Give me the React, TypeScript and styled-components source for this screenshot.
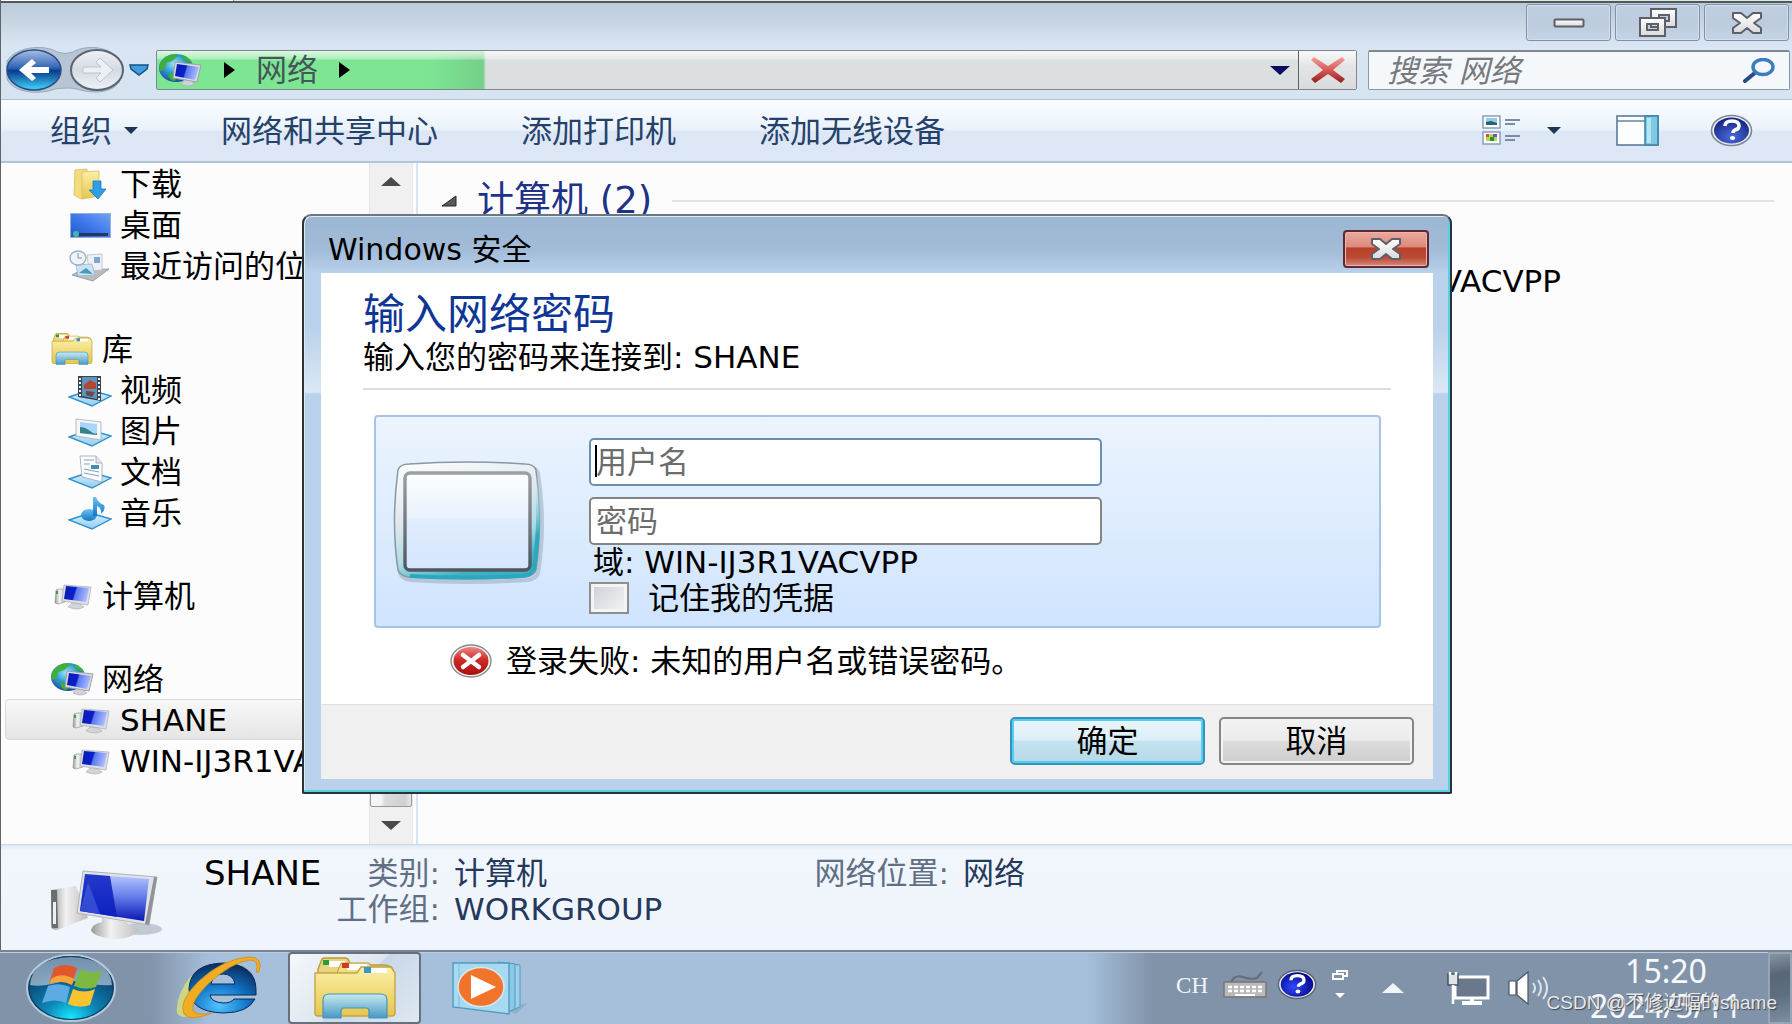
import React from "react";
import styled, { createGlobalStyle } from "styled-components";

const GlobalStyle = createGlobalStyle`
  * { box-sizing: border-box; }
  html, body { margin: 0; padding: 0; }
  body {
    font-family: "DejaVu Sans", "Noto Sans CJK SC", sans-serif;
    font-size: 31px;
    line-height: 40px;
    color: #000;
    background: #fcfcfc;
    overflow: hidden;
  }
  button, input {
    font: inherit;
    color: inherit;
    margin: 0;
    padding: 0;
  }
  h1, h2, p, ul, dl, dd, dt { margin: 0; padding: 0; font-weight: 400; }
  svg { display: block; flex: none; }
`;

/* ---------- explorer window ---------- */

const Desktop = styled.div`
  position: relative;
  display: flex;
  flex-direction: column;
  min-height: 100vh;
`;

const ExplorerWindow = styled.div`
  flex: 1;
  display: flex;
  flex-direction: column;
  min-height: 0;
  border-left: 1px solid #5f6468;
`;

const BackgroundTab = styled.div`
  height: 3px;
  border-bottom: 2px solid #4f5a58;
  background: linear-gradient(90deg, #fff 232px, #8f9a98 232px, #8f9a98 233px, #dfe9e4 233px);
`;

const Chrome = styled.header`
  display: flex;
  flex-direction: column;
  gap: 6px;
  height: 97px;
  background: linear-gradient(180deg, #bccbd9 0, #c8d6e4 20px, #d9e5f2 42px, #d6e3f0 100%);
  border-bottom: 1px solid #b5c0cb;
`;

const WindowButtons = styled.div`
  display: flex;
  justify-content: flex-end;
  gap: 4px;
  padding: 1px 3px 0 0;
`;

const WindowButton = styled.button`
  display: grid;
  place-items: center;
  width: 85px;
  height: 37px;
  background: linear-gradient(180deg, #c0cfe0, #bccbdd 50%, #c5d4e5);
  border: 1px solid #8290ad;
  border-radius: 3px;
  box-shadow: inset 0 0 0 1px #d3dfec;
`;

const NavRow = styled.div`
  display: flex;
  align-items: center;
  padding: 0 2px 0 2px;
`;

const AddressBar = styled.div`
  flex: 1;
  display: flex;
  align-items: center;
  height: 40px;
  margin-left: 2px;
  border: 1px solid #80868c;
  border-radius: 2px;
  background:
    linear-gradient(180deg, rgba(255, 255, 255, 0.75) 0, rgba(255, 255, 255, 0.35) 8px, transparent 9px),
    linear-gradient(90deg, #7de693 0, #7de693 270px, #74d08a 326px, transparent 329px),
    #dcdfe0;
`;

const Crumb = styled.button`
  display: flex;
  align-items: center;
  gap: 21px;
  height: 38px;
  padding: 0;
  border: 0;
  background: none;
  color: #44565c;
`;

const AddressSpacer = styled.div`
  flex: 1;
`;

const DropButton = styled.button<{ $narrow?: boolean }>`
  display: grid;
  place-items: center;
  width: ${(p) => (p.$narrow ? 30 : 37)}px;
  height: 38px;
  border: 0;
  background: none;
`;

const StopButton = styled.button`
  display: grid;
  place-items: center;
  width: 58px;
  height: 38px;
  border: 0;
  border-left: 1px solid #5e6266;
  background: linear-gradient(180deg, #fafafa, #e3e4e5 40%, #d9dbdc);
`;

const SearchBox = styled.label`
  display: flex;
  align-items: center;
  width: 422px;
  height: 40px;
  margin-left: 11px;
  padding: 0 14px 0 18px;
  border: 1px solid #8e979f;
  border-top: 2px solid #80878e;
  border-radius: 2px;
  background: #f5f8fb;
`;

const SearchInput = styled.input`
  flex: 1;
  min-width: 0;
  height: 36px;
  border: 0;
  outline: 0;
  background: transparent;
  font-style: italic;
  &::placeholder { color: #767a7e; opacity: 1; }
`;

const Toolbar = styled.div`
  display: flex;
  align-items: center;
  height: 63px;
  padding: 0 39px 0 49px;
  background: linear-gradient(180deg, #fbfdff 0, #e9f2fb 30px, #dde7f5 31px, #dce6f4 100%);
  border-bottom: 2px solid #b4c4d8;
`;

const Commands = styled.div`
  flex: 1;
  display: flex;
  gap: 83px;
`;

const Tools = styled.div`
  display: flex;
  align-items: center;
`;

const ToolButton = styled.button<{ $gap?: number }>`
  display: flex;
  align-items: center;
  gap: 12px;
  margin-left: ${(p) => p.$gap || 0}px;
  border: 0;
  background: none;
  color: #25416a;
  white-space: nowrap;
`;

const Body = styled.div`
  flex: 1;
  display: flex;
  min-height: 0;
  background: #fcfcfc;
`;

const Sidebar = styled.nav`
  width: 368px;
  overflow: hidden;
`;

const TreeGroup = styled.ul`
  list-style: none;
  margin-bottom: 42px;
`;

const TreeRow = styled.li<{ $level: number; $selected?: boolean }>`
  display: grid;
  grid-template-columns: 44px 1fr;
  column-gap: 8px;
  align-items: center;
  height: 41px;
  margin-left: 4px;
  padding-left: ${(p) => (p.$level === 1 ? 44 : 62)}px;
  white-space: nowrap;
  border: 1px solid ${(p) => (p.$selected ? "#d9d9d9" : "transparent")};
  border-radius: 4px;
  background: ${(p) => (p.$selected ? "linear-gradient(180deg, #f8f8f8, #e5e5e5)" : "none")};
`;

const TreeIcon = styled.span`
  display: grid;
  place-items: center;
`;

const TreeLink = styled.a`
  color: #000;
  text-decoration: none;
`;

const ScrollTrack = styled.div`
  display: flex;
  flex-direction: column;
  align-items: center;
  width: 44px;
  border-left: 1px solid #e4e4e4;
  border-right: 1px solid #e9e9e9;
  background: #f0f0f0;
`;

const ScrollButton = styled.button`
  display: grid;
  place-items: center;
  width: 42px;
  height: 37px;
  border: 0;
  background: none;
`;

const ScrollThumb = styled.div`
  flex: 1;
  width: 42px;
  margin-top: 40px;
  border: 1px solid #979797;
  border-radius: 2px;
  background: linear-gradient(90deg, #f5f5f5 25%, #d9dadc 35%, #cfd1d4 85%, #e6e6e8);
`;

const Content = styled.main`
  flex: 1;
  margin-left: 3px;
  padding: 15px 18px 0 23px;
  border-left: 2px solid #d6e5f5;
`;

const GroupHeader = styled.div`
  display: flex;
  align-items: center;
  gap: 20px;
  height: 46px;
`;

const GroupTitle = styled.h2`
  font-size: 37px;
  color: #1e3287;
  white-space: nowrap;
`;

const GroupRule = styled.div`
  flex: 1;
  height: 2px;
  background: #e2e2e2;
`;

const Items = styled.div`
  display: flex;
  justify-content: flex-end;
  padding: 37px 213px 0 0;
`;

const Details = styled.footer`
  display: flex;
  height: 106px;
  padding: 8px 0 0 49px;
  border-top: 1px solid #c9d6e6;
  background: linear-gradient(180deg, #dfe8f3 0, #f1f5fc 5px, #f0f4fc 100%);
`;

const DetailsPicture = styled.div`
  padding-top: 17px;
`;

const DetailsName = styled.p`
  width: 156px;
  margin-left: 40px;
  font-size: 34px;
`;

const Props = styled.dl<{ $keyWidth: number }>`
  display: grid;
  grid-template-columns: ${(p) => p.$keyWidth}px auto;
  grid-auto-rows: 36px;
  column-gap: 14px;
`;

const Key = styled.dt`
  white-space: nowrap;
  justify-self: end;
  color: #5f6f85;
`;

const Value = styled.dd`
  color: #24395c;
  white-space: nowrap;
`;

const DetailColumns = styled.div`
  display: grid;
  grid-template-columns: 330px auto;
`;

/* ---------- dialog ---------- */

const Dialog = styled.section`
  position: absolute;
  left: 302px;
  top: 214px;
  width: 1150px;
  display: flex;
  flex-direction: column;
  padding: 0 17px 13px;
  border: 2px solid #2b3338;
  border-top-color: #6e777f;
  border-radius: 9px 9px 2px 2px;
  background:
    linear-gradient(180deg, #9bb6d3 0, #a3bcd8 35px, #b9d1ea 57px, #b9d1ea 110px, #dbe8f5 176px, #b9d1ea 178px);
  box-shadow: inset -2px -2px 0 #58cfe4, inset 1px 1px 0 #dce8f4;
`;

const DialogTitleBar = styled.div`
  display: flex;
  justify-content: space-between;
  align-items: flex-start;
  height: 57px;
  padding: 14px 4px 0 7px;
`;

const DialogTitle = styled.span`
  font-size: 30px;
`;

const DialogClose = styled.button`
  display: grid;
  place-items: center;
  width: 86px;
  height: 38px;
  border: 2px solid #5c2a35;
  border-radius: 4px;
  background: linear-gradient(180deg, #e9a99d 0, #dc8a7c 45%, #b8402a 46%, #bb4934 75%, #d4897a 100%);
  box-shadow: inset 0 0 0 1px #eeb5aa;
`;

const DialogBody = styled.form`
  display: flex;
  flex-direction: column;
  background: #fff;
`;

const DialogIntro = styled.div`
  margin: 20px 42px 0;
  padding-bottom: 11px;
  border-bottom: 2px solid #dedede;
`;

const DialogHeading = styled.h1`
  font-size: 42px;
  line-height: 44px;
  color: #0d3696;
`;

const CredentialPanel = styled.div`
  display: flex;
  height: 213px;
  margin: 25px 52px 0 53px;
  padding: 21px 0 0 14px;
  border: 2px solid #a6c4e8;
  border-radius: 4px;
  background: linear-gradient(180deg, #ecf4fe, #cfe4fe);
`;

const PictureSlot = styled.div`
  padding-top: 22px;
  width: 199px;
`;

const Fields = styled.div`
  display: flex;
  flex-direction: column;
  width: 513px;
`;

const FieldStack = styled.div`
  display: flex;
  flex-direction: column;
  gap: 11px;
`;

const FieldWrap = styled.div`
  position: relative;
  height: 48px;
`;

const TextField = styled.input<{ $active?: boolean }>`
  width: 100%;
  height: 48px;
  padding: 0 5px;
  border: 2px solid ${(p) => (p.$active ? "#6a8fae" : "#848484")};
  border-radius: 5px;
  background: #fff;
  outline: 0;
  &::placeholder { color: #6d6d6d; opacity: 1; }
`;

const Caret = styled.span`
  position: absolute;
  left: 6px;
  top: 7px;
  width: 2px;
  height: 32px;
  background: #000;
`;

const DomainLine = styled.p`
  line-height: 34px;
  padding-left: 4px;
  white-space: nowrap;
`;

const RememberLabel = styled.label`
  display: flex;
  align-items: center;
  gap: 19px;
  height: 38px;
`;

const CheckBox = styled.input`
  appearance: none;
  width: 40px;
  height: 32px;
  border: 2px solid #8e8f8f;
  background: linear-gradient(135deg, #cbcfd5, #f6f6f6);
  box-shadow: inset 0 0 0 3px #f4f4f4;
`;

const ErrorLine = styled.p`
  display: flex;
  align-items: center;
  gap: 14px;
  height: 40px;
  margin: 13px 0 0 129px;
`;

const DialogFooter = styled.div`
  display: flex;
  justify-content: flex-end;
  gap: 14px;
  height: 75px;
  margin-top: 23px;
  padding: 12px 19px 0 0;
  border-top: 1px solid #dfdfdf;
  background: #f0f0f0;
`;

const PushButton = styled.button<{ $primary?: boolean }>`
  width: 195px;
  height: 48px;
  border: 2px solid ${(p) => (p.$primary ? "#3c8fb8" : "#858585")};
  border-radius: 5px;
  background: ${(p) =>
    p.$primary
      ? "linear-gradient(180deg, #ecf6fb 0, #dceff7 48%, #c6e2ee 50%, #b5d8e8 100%)"
      : "linear-gradient(180deg, #f3f3f3 0, #ebebeb 48%, #dddddd 50%, #cdcdcd 100%)"};
  box-shadow: ${(p) => (p.$primary ? "inset 0 0 0 2px #4dd0f4" : "inset 0 0 0 2px #f3f3f3")};
`;

/* ---------- taskbar ---------- */

const Taskbar = styled.footer`
  display: flex;
  height: 74px;
  border-top: 2px solid #77838f;
  background: linear-gradient(90deg, #8193a9 0, #8193a9 150px, #a6bfdb 210px, #a6bfdb calc(100% - 705px), #8193a9 calc(100% - 640px), #8193a9 100%);
  box-shadow: inset 0 1px 0 #bccddd;
`;

const TaskButton = styled.button<{ $width: number; $open?: boolean }>`
  display: grid;
  place-items: center;
  width: ${(p) => p.$width}px;
  height: 72px;
  border: ${(p) => (p.$open ? "2px solid #66717d" : "0")};
  border-radius: 4px;
  background: ${(p) =>
    p.$open ? "linear-gradient(135deg, #f4f7fa 0, #dde6ef 50%, #c9d8e8 51%, #dfe8f2 100%)" : "none"};
`;

const TaskSpacer = styled.div`
  flex: 1;
`;

const Tray = styled.div`
  display: flex;
  align-items: center;
  color: #fff;
`;

const TrayItem = styled.button<{ $left?: number; $lift?: number }>`
  display: block;
  margin-left: ${(p) => p.$left || 0}px;
  margin-bottom: ${(p) => p.$lift || 0}px;
  border: 0;
  background: none;
`;

const Language = styled(TrayItem)`
  font-family: "Liberation Serif", serif;
  font-size: 23px;
  line-height: 28px;
  color: #f4f7fa;
`;

const Clock = styled.div`
  width: 170px;
  margin-left: 31px;
  font-family: "Noto Sans", sans-serif;
  font-size: 32px;
  line-height: 35px;
  text-align: center;
  color: #f6f9fb;
`;

const ShowDesktop = styled.button`
  width: 24px;
  height: 72px;
  margin-left: 17px;
  border: 2px solid #98a5b3;
  background: linear-gradient(170deg, #8793a1 0, #586677 30%, #5e6e81 60%, #7c8ea5 100%);
`;

const Watermark = styled.p`
  position: absolute;
  right: 15px;
  bottom: 6px;
  font-family: "Liberation Sans", "Noto Sans CJK SC", sans-serif;
  font-size: 19px;
  line-height: 30px;
  color: #e6e8ea;
  text-shadow: 1px 1px 1px #3c4650;
  white-space: nowrap;
`;

/* ---------- drawings ---------- */

const DefsSvg = styled.svg`
  position: absolute;
`;

const SharedDefs = () => (
  <DefsSvg width="0" height="0" aria-hidden="true">
    <defs>
      <linearGradient id="screen" x1="0" y1="0" x2="1" y2="0.2">
        <stop offset="0" stopColor="#0a1bb0" />
        <stop offset="0.48" stopColor="#0b1fcc" />
        <stop offset="0.54" stopColor="#5a78f0" />
        <stop offset="1" stopColor="#a9baff" />
      </linearGradient>
      <linearGradient id="screenDeep" x1="0" y1="0" x2="0" y2="1">
        <stop offset="0" stopColor="#b9c9ff" />
        <stop offset="0.45" stopColor="#6a83ee" />
        <stop offset="1" stopColor="#0a17b4" />
      </linearGradient>
      <linearGradient id="metal" x1="0" y1="0" x2="1" y2="0">
        <stop offset="0" stopColor="#9a9a9a" />
        <stop offset="0.4" stopColor="#f2f2f2" />
        <stop offset="1" stopColor="#bdbdbd" />
      </linearGradient>
      <radialGradient id="globe" cx="0.45" cy="0.35" r="0.7">
        <stop offset="0" stopColor="#9fe6ff" />
        <stop offset="0.45" stopColor="#2f9fd0" />
        <stop offset="1" stopColor="#1a3f9a" />
      </radialGradient>
      <linearGradient id="backFill" x1="0" y1="0" x2="0" y2="1">
        <stop offset="0" stopColor="#a9bfe4" />
        <stop offset="0.45" stopColor="#2f62b4" />
        <stop offset="0.52" stopColor="#0a3a8c" />
        <stop offset="1" stopColor="#3fd8fb" />
      </linearGradient>
      <linearGradient id="forwardFill" x1="0" y1="0" x2="0" y2="1">
        <stop offset="0" stopColor="#eef2f6" />
        <stop offset="0.5" stopColor="#d3dae2" />
        <stop offset="1" stopColor="#eef3f8" />
      </linearGradient>
      <linearGradient id="glyph" x1="0" y1="0" x2="0" y2="1">
        <stop offset="0" stopColor="#fff" />
        <stop offset="1" stopColor="#d9d9dc" />
      </linearGradient>
      <linearGradient id="folder" x1="0" y1="0" x2="0" y2="1">
        <stop offset="0" stopColor="#fbf0a8" />
        <stop offset="1" stopColor="#e6c64c" />
      </linearGradient>
      <linearGradient id="clip" x1="0" y1="0" x2="0" y2="1">
        <stop offset="0" stopColor="#c3ecf8" />
        <stop offset="1" stopColor="#3f96cf" />
      </linearGradient>
      <linearGradient id="redX" x1="0" y1="0" x2="0" y2="1">
        <stop offset="0" stopColor="#f2a09a" />
        <stop offset="0.5" stopColor="#d85a55" />
        <stop offset="1" stopColor="#8e1c1c" />
      </linearGradient>
      <radialGradient id="helpFill" cx="0.5" cy="0.75" r="0.7">
        <stop offset="0" stopColor="#4a6be0" />
        <stop offset="1" stopColor="#16267f" />
      </radialGradient>
      <radialGradient id="trayHelp" cx="0.4" cy="0.6" r="0.6">
        <stop offset="0" stopColor="#2f4bff" />
        <stop offset="1" stopColor="#06088c" />
      </radialGradient>
      <linearGradient id="errorFill" x1="0" y1="0" x2="0" y2="1">
        <stop offset="0" stopColor="#e88a86" />
        <stop offset="0.45" stopColor="#cf2a28" />
        <stop offset="1" stopColor="#a90f10" />
      </linearGradient>
      <linearGradient id="desktopFill" x1="0" y1="1" x2="1" y2="0">
        <stop offset="0" stopColor="#1d55cf" />
        <stop offset="0.5" stopColor="#3f78ea" />
        <stop offset="1" stopColor="#6fa2f8" />
      </linearGradient>
      <linearGradient id="tray3d" x1="0" y1="0" x2="0" y2="1">
        <stop offset="0" stopColor="#d9f1fc" />
        <stop offset="1" stopColor="#8fcdf0" />
      </linearGradient>
      <linearGradient id="note" x1="0" y1="0" x2="0" y2="1">
        <stop offset="0" stopColor="#6cc2f2" />
        <stop offset="1" stopColor="#1177c4" />
      </linearGradient>
    </defs>
  </DefsSvg>
);

const BackForward = () => (
  <svg width="121" height="46" viewBox="0 0 121 46" aria-hidden="true">
    <path d="M4 14C14-2 44-2 54 5Q62 8 70 5C86-4 114 0 119 20C121 38 108 45 92 45C80 45 74 41 66 41Q58 41 52 42C36 48 10 46 4 32Z" fill="#b7c4d3" stroke="#99a7b8" />
    <ellipse cx="31" cy="23" rx="27" ry="20" fill="url(#backFill)" stroke="#2a4b86" strokeWidth="1.5" />
    <path d="M16 23L29 12L33 16L28 20H46V26H28L33 31L29 34Z" fill="#fff" />
    <ellipse cx="94" cy="23" rx="26" ry="20" fill="url(#forwardFill)" stroke="#5c6470" strokeWidth="2" />
    <path d="M110 23L97 11L93 15L98 20H80V26H98L93 31L97 35Z" fill="#eceff3" stroke="#bcc4cd" />
  </svg>
);

const HistoryArrow = () => (
  <svg width="24" height="14" viewBox="0 0 24 14" aria-hidden="true">
    <path d="M3 2H21L20 6L12 12L4 6Z" fill="#3d9fe0" stroke="#1d4f86" strokeWidth="1.5" />
  </svg>
);

const Globe = ({ width = 44, height = 34 }: { width?: number; height?: number }) => (
  <svg width={width} height={height} viewBox="0 0 44 34" aria-hidden="true">
    <ellipse cx="18" cy="15" rx="17" ry="14" fill="url(#globe)" />
    <path d="M4 8C10 0 18 1 20 3L14 8L8 10L7 16L2 18C1 13 2 10 4 8ZM14 20L20 22L17 28C13 28 11 25 10 22ZM24 2C30 4 34 8 34 10L28 8L25 6Z" fill="#3fae3a" />
    <path d="M17 9L43 12L39 29L15 25Z" fill="#d7dbe0" stroke="#9aa0a8" />
    <path d="M19 11L41 14L37 27L17 23Z" fill="url(#screen)" />
    <path d="M26 27L33 28L37 31Q31 35 23 31Z" fill="#cfd2d6" stroke="#a3a6aa" strokeWidth="0.6" />
  </svg>
);

const Computer = () => (
  <svg width="42" height="29" viewBox="-3 -2 42 29" aria-hidden="true">
    <path d="M2 6L5 5L12 5L11 18L4 20L1 19Z" fill="url(#metal)" stroke="#8c8c8c" strokeWidth="0.6" />
    <rect x="2" y="7" width="2" height="3" fill="#3aa03a" />
    <path d="M10 1L37 3L34 21L8 17Z" fill="#dcdfe3" stroke="#a7abb0" strokeWidth="0.7" />
    <path d="M12 2L35 4L32 18L10 15Z" fill="url(#screen)" />
    <path d="M18 19L26 20L30 23Q24 27 14 23Z" fill="#d2d4d7" stroke="#a9a9a9" strokeWidth="0.6" />
  </svg>
);

const BigComputer = () => (
  <svg width="114" height="72" viewBox="0 0 114 72" aria-hidden="true">
    <ellipse cx="90" cy="59" rx="22" ry="6" fill="#c3c9d2" />
    <path d="M1 20L26 16L38 48L7 60Q1 60 1 56Z" fill="url(#metal)" />
    <path d="M1 20L7 20L8 58L2 58Z" fill="#6a6d72" />
    <rect x="3" y="32" width="3" height="22" fill="#f0f0f0" />
    <path d="M33 1L107 7L99 55L27 43Z" fill="#dfe2e6" stroke="#b0b4b8" />
    <path d="M104 7L107 7L99 55L95 54Z" fill="#8f9399" />
    <path d="M35 4L99 9L94 51L30 41Z" fill="url(#screenDeep)" />
    <path d="M35 4L60 6L67 47L30 41Z" fill="#0a1fc0" opacity="0.85" />
    <path d="M30 41L38 12L50 44Z" fill="#4a62e0" opacity="0.6" />
    <path d="M52 48L76 52L90 60Q80 70 62 69Q42 66 41 60Q42 54 52 52Z" fill="url(#metal)" />
  </svg>
);

const Downloads = () => (
  <svg width="34" height="32" viewBox="0 0 34 32" aria-hidden="true">
    <path d="M2 2L14 1V27L8 31L1 27Z" fill="#f3dc80" stroke="#d9bd5e" strokeWidth="0.8" />
    <path d="M9 4L26 3V28L9 31Z" fill="url(#folder)" stroke="#d9bd5e" strokeWidth="0.8" />
    <path d="M20 13H28V21H33L25 31L16 22H20Z" fill="#2f9fe4" stroke="#1a76bb" strokeWidth="0.8" />
  </svg>
);

const DesktopIcon = () => (
  <svg width="41" height="25" viewBox="0 0 41 25" aria-hidden="true">
    <rect x="0.5" y="0.5" width="40" height="24" fill="url(#desktopFill)" stroke="#98b0d4" />
    <rect x="3" y="20" width="35" height="3" fill="#1d3a66" />
    <circle cx="6" cy="21" r="3" fill="#3fb6b0" />
  </svg>
);

const Recent = () => (
  <svg width="42" height="32" viewBox="0 0 42 32" aria-hidden="true">
    <path d="M3 25L12 20L40 19L24 31Z" fill="#b9bcc0" stroke="#8d9094" strokeWidth="0.8" />
    <path d="M18 5L33 4V20L20 21Z" fill="#eef1f4" stroke="#b7bcc2" strokeWidth="0.8" />
    <rect x="25" y="7" width="6" height="6" fill="#7aa6d8" />
    <path d="M7 15L23 14L26 25L9 26Z" fill="#c9e2f6" stroke="#9fb2c4" strokeWidth="0.8" />
    <path d="M10 23L17 18L24 24Z" fill="#4d98b9" />
    <ellipse cx="9" cy="8" rx="8" ry="7" fill="#edf3f8" stroke="#9db2c4" strokeWidth="1.4" />
    <path d="M9 3V8H13" fill="none" stroke="#7c93a8" />
  </svg>
);

const Library = ({ width = 42, height = 32 }: { width?: number; height?: number }) => (
  <svg width={width} height={height} viewBox="0 0 84 62" preserveAspectRatio="none" aria-hidden="true">
    <path d="M5 12L9 2Q10 1 12 1H32Q35 1 36 4L38 8H70Q80 8 80 14V54H5Z" fill="#ead57c" stroke="#b99b3e" strokeWidth="1.4" />
    <rect x="16" y="4" width="16" height="6" fill="#fff" />
    <rect x="10" y="3" width="6" height="5" fill="#2f9a3c" />
    <path d="M24 16L28 6H56L60 12H80V20H24Z" fill="#f0dc86" stroke="#b99b3e" />
    <rect x="34" y="7" width="20" height="6" fill="#fff" />
    <rect x="29" y="6" width="7" height="5" fill="#d03a24" />
    <path d="M2 16H44L48 10H78L82 16V56Q82 59 79 59H5Q2 59 2 56Z" fill="url(#folder)" stroke="#c4a545" strokeWidth="1.4" />
    <rect x="58" y="11" width="16" height="5" fill="#fff" />
    <rect x="51" y="10" width="7" height="6" fill="#3b95c8" />
    <path d="M10 61V43Q10 37 16 37H68Q74 37 74 43V61H56V54Q56 51 53 51H31Q28 51 28 54V61Z" fill="url(#clip)" stroke="#3a8fc0" strokeWidth="1.2" opacity="0.93" />
  </svg>
);

const TrayBase = () => (
  <path d="M1 24L22 17L43 23L24 33Z" fill="url(#tray3d)" stroke="#2f90cc" strokeWidth="1.4" />
);

const Video = () => (
  <svg width="44" height="34" viewBox="0 0 44 34" aria-hidden="true">
    <TrayBase />
    <path d="M10 3H33V28L10 24Z" fill="#38434f" />
    <path d="M14 4H29V26L14 23Z" fill="#5e93bd" />
    <path d="M16 12L22 7L28 10V16H16Z" fill="#b5462f" />
    <path d="M18 18L27 19L24 24L18 22Z" fill="#6a4a43" />
    <path d="M12 5V24M31 5V27" stroke="#f0f0f0" strokeWidth="2" strokeDasharray="2 2" />
  </svg>
);

const Picture = () => (
  <svg width="44" height="32" viewBox="0 0 44 32" aria-hidden="true">
    <g transform="translate(0 -2)"><TrayBase /></g>
    <path d="M8 4L33 7V25L8 21Z" fill="#f5f7f9" stroke="#a5acb4" strokeWidth="0.8" />
    <path d="M12 7L29 9V20L12 18Z" fill="#a9d5f8" />
    <path d="M12 12Q17 12 22 16T29 18V20L12 18Z" fill="#35808c" />
  </svg>
);

const Documents = () => (
  <svg width="44" height="34" viewBox="0 0 44 34" aria-hidden="true">
    <TrayBase />
    <path d="M12 1H28L34 8V27L14 22Z" fill="#fbfcfd" stroke="#9ca6b0" strokeWidth="0.8" />
    <path d="M28 1V8H34" fill="#dfe5ec" stroke="#9ca6b0" strokeWidth="0.8" />
    <path d="M16 5H26M16 9H22M16 14L31 17M16 18L31 21" stroke="#8c9fc0" strokeWidth="1.2" />
    <rect x="23" y="10" width="8" height="4" fill="#3f8fb3" />
  </svg>
);

const Music = () => (
  <svg width="44" height="34" viewBox="0 0 44 34" aria-hidden="true">
    <TrayBase />
    <ellipse cx="21" cy="19" rx="8" ry="6" fill="url(#note)" />
    <path d="M25 20V1H28Q30 7 36 9Q38 14 33 18Q34 12 29 10V20Z" fill="url(#note)" />
  </svg>
);

const Triangle = ({ dir, w, h, fill }: { dir: "right" | "down" | "up"; w: number; h: number; fill: string }) => {
  const points =
    dir === "right" ? `0,0 ${w},${h / 2} 0,${h}` : dir === "down" ? `0,0 ${w},0 ${w / 2},${h}` : `0,${h} ${w},${h} ${w / 2},0`;
  return (
    <svg width={w} height={h} viewBox={`0 0 ${w} ${h}`} aria-hidden="true">
      <polygon points={points} fill={fill} />
    </svg>
  );
};

const CrossGlyph = () => (
  <svg width="34" height="24" viewBox="0 0 34 24" aria-hidden="true">
    <path d="M3 2H11L17 7L23 2H31V7L24 12L31 17V22H23L17 17L11 22H3V17L10 12L3 7Z" fill="url(#glyph)" stroke="#5d6069" strokeWidth="2" strokeLinejoin="round" />
  </svg>
);

const MinimizeGlyph = () => (
  <svg width="32" height="10" viewBox="0 0 32 10" aria-hidden="true">
    <rect x="1.5" y="1.5" width="29" height="7" rx="1" fill="url(#glyph)" stroke="#5d6069" strokeWidth="2" />
  </svg>
);

const RestoreGlyph = () => (
  <svg width="40" height="30" viewBox="0 0 40 30" aria-hidden="true">
    <path d="M13 1H38V19H13ZM21 7V13H31V7Z" fill="url(#glyph)" stroke="#5d6069" strokeWidth="2" fillRule="evenodd" />
    <path d="M2 10H27V28H2ZM9 16V22H20V16Z" fill="url(#glyph)" stroke="#5d6069" strokeWidth="2" fillRule="evenodd" />
  </svg>
);

const StopGlyph = () => (
  <svg width="36" height="28" viewBox="0 0 36 28" aria-hidden="true">
    <path d="M4 1L18 10L32 1L35 4L23 14L35 23L31 27L18 18L5 27L1 23L13 14L1 4Z" fill="url(#redX)" />
  </svg>
);

const Magnifier = () => (
  <svg width="32" height="26" viewBox="0 0 32 26" aria-hidden="true">
    <path d="M2 23L13 14" stroke="#2a4a86" strokeWidth="4" strokeLinecap="round" />
    <ellipse cx="20" cy="9" rx="10" ry="7.5" fill="#f5f8fb" stroke="#3b7cc0" strokeWidth="3.4" />
  </svg>
);

const ViewGlyph = () => (
  <svg width="40" height="31" viewBox="0 0 40 31" aria-hidden="true">
    <rect x="1" y="1" width="17" height="12" fill="#fff" stroke="#8298b4" strokeWidth="1.4" />
    <rect x="4" y="3" width="11" height="7" fill="#8ecdea" />
    <path d="M4 7L9 6L15 8V10H4Z" fill="#28656b" />
    <rect x="1" y="17" width="17" height="12" fill="#fff" stroke="#8298b4" strokeWidth="1.4" />
    <rect x="4" y="19" width="11" height="7" fill="#b8d84e" />
    <rect x="4" y="19" width="3" height="3" fill="#d8552f" />
    <rect x="11" y="19" width="4" height="3" fill="#6a55c0" />
    <rect x="8" y="22" width="4" height="4" fill="#2f8c3c" />
    <path d="M23 5H38M23 9H33M23 21H38M23 25H33" stroke="#7c8da3" strokeWidth="1.8" />
  </svg>
);

const PreviewGlyph = () => (
  <svg width="43" height="31" viewBox="0 0 43 31" aria-hidden="true">
    <rect x="1" y="1" width="41" height="29" fill="#fcfdfe" stroke="#5b7a9c" strokeWidth="1.6" />
    <path d="M1 6H29" stroke="#5b7a9c" strokeWidth="1.4" />
    <rect x="29" y="1" width="13" height="29" fill="#7fc8e2" stroke="#3c87ac" strokeWidth="1.6" />
    <rect x="31" y="3" width="4" height="25" fill="#b5e4f2" />
  </svg>
);

const HelpGlyph = ({ w, h, fill, ring }: { w: number; h: number; fill: string; ring: string }) => (
  <svg width={w} height={h} viewBox="0 0 43 33" preserveAspectRatio="none" aria-hidden="true">
    <ellipse cx="21.5" cy="16.5" rx="20" ry="15" fill="#eef0f2" stroke={ring} strokeWidth="1.6" />
    <ellipse cx="21.5" cy="16.5" rx="17.5" ry="13" fill={fill} />
    <path d="M15 12Q15 7 22 7T29 12Q29 15 25 16Q23 17 23 19" fill="none" stroke="#fff" strokeWidth="3.6" />
    <ellipse cx="22.5" cy="24" rx="2.6" ry="2.1" fill="#fff" />
  </svg>
);

const Collapse = () => (
  <svg width="16" height="12" viewBox="0 0 16 12" aria-hidden="true">
    <path d="M15 1V11H1Z" fill="#595959" stroke="#262626" />
  </svg>
);

const UserTile = () => (
  <svg width="156" height="126" viewBox="0 0 156 126" aria-hidden="true">
    <defs>
      <linearGradient id="tileFrame" x1="0" y1="0" x2="0.35" y2="1">
        <stop offset="0" stopColor="#fdfefe" />
        <stop offset="0.5" stopColor="#dfe7ec" />
        <stop offset="0.8" stopColor="#a9dbe4" />
        <stop offset="1" stopColor="#3fb0c2" />
      </linearGradient>
      <linearGradient id="tileGlass" x1="0" y1="0" x2="0" y2="1">
        <stop offset="0" stopColor="#fdfeff" />
        <stop offset="0.45" stopColor="#eaf2fd" />
        <stop offset="0.5" stopColor="#dfecfd" />
        <stop offset="1" stopColor="#d6e6fe" />
      </linearGradient>
      <linearGradient id="tileEdge" x1="0" y1="0" x2="0" y2="1">
        <stop offset="0" stopColor="#9aa0a5" />
        <stop offset="1" stopColor="#4e565e" />
      </linearGradient>
      <linearGradient id="tileRight" x1="0" y1="0" x2="0" y2="1">
        <stop offset="0" stopColor="#fff" stopOpacity="0" />
        <stop offset="0.6" stopColor="#2ca8bd" />
        <stop offset="1" stopColor="#2ca8bd" />
      </linearGradient>
    </defs>
    <path d="M9 11Q11 5 20 5Q77 0 136 5Q145 5 147 11Q155 62 147 111Q145 117 136 118Q77 122 20 118Q11 117 9 111Q1 62 9 11Z" fill="none" stroke="#7f93a8" strokeWidth="4" opacity="0.4" transform="translate(1 2)" />
    <path d="M8 10Q10 4 19 4Q76 0 135 4Q144 4 146 10Q153 62 146 110Q144 116 135 117Q76 121 19 117Q10 116 8 110Q1 62 8 10Z" fill="url(#tileFrame)" stroke="#8798a4" strokeWidth="1.5" />
    <path d="M146 12Q151 62 144 109Q141 115 132 116Q76 119 20 116" fill="none" stroke="url(#tileRight)" strokeWidth="4" />
    <rect x="15" y="13" width="125" height="97" rx="5" fill="url(#tileGlass)" stroke="url(#tileEdge)" strokeWidth="3.4" />
  </svg>
);

const ErrorIcon = () => (
  <svg width="42" height="34" viewBox="0 0 42 34" aria-hidden="true">
    <ellipse cx="21" cy="17" rx="20" ry="16" fill="#f2f2f2" stroke="#8a8a8a" strokeWidth="1.4" />
    <ellipse cx="21" cy="17" rx="17.5" ry="14" fill="url(#errorFill)" />
    <path d="M13 11L29 23M29 11L13 23" stroke="#fff" strokeWidth="4.5" strokeLinecap="round" />
  </svg>
);

const StartOrb = () => (
  <svg width="90" height="68" viewBox="0 0 90 68" aria-hidden="true">
    <defs>
      <radialGradient id="orb" cx="0.5" cy="0.95" r="0.75">
        <stop offset="0" stopColor="#19e6ff" />
        <stop offset="0.4" stopColor="#0d86b4" />
        <stop offset="1" stopColor="#0b3f6e" />
      </radialGradient>
      <linearGradient id="orbTop" x1="0" y1="0" x2="0" y2="1">
        <stop offset="0" stopColor="#eef4f8" stopOpacity="0.45" />
        <stop offset="1" stopColor="#b9ccd8" stopOpacity="0.7" />
      </linearGradient>
    </defs>
    <ellipse cx="45" cy="34" rx="44" ry="33" fill="url(#orb)" stroke="#b5c9da" strokeWidth="2" />
    <ellipse cx="45" cy="34" rx="42" ry="31.5" fill="none" stroke="#123f66" strokeWidth="1.2" />
    <path d="M4 31Q6 4 45 3Q84 4 86 31Q74 32 62 29Q45 25 30 29Q14 33 4 31Z" fill="url(#orbTop)" />
    <path d="M28 14Q39 8 51 14L46 31Q35 25 23 30Z" fill="#e2562b" />
    <path d="M26 24Q36 18 48 25L46 31Q35 25 23 30Z" fill="#f6a43c" />
    <path d="M54 15Q65 21 76 16L70 33Q59 37 48 32Z" fill="#7cb842" />
    <path d="M22 32Q33 28 44 33L40 49Q29 44 16 49Z" fill="#5cabe3" />
    <path d="M47 35Q58 40 69 35L64 51Q53 55 42 50Z" fill="#f9c230" />
  </svg>
);

const InternetExplorer = () => (
  <svg width="94" height="64" viewBox="-8 0 94 64" aria-hidden="true">
    <defs>
      <radialGradient id="ieBlue" cx="0.45" cy="0.85" r="0.85">
        <stop offset="0" stopColor="#4fc4ff" />
        <stop offset="0.5" stopColor="#1173c8" />
        <stop offset="1" stopColor="#0a2a58" />
      </radialGradient>
    </defs>
    <path d="M15 20Q-1 40 1 57Q5 63 13 60Q8 48 22 28Z" fill="#d5de7a" opacity="0.85" />
    <path d="M80 39V34Q80 8 47 7Q14 8 13 33Q14 56 47 57Q72 57 79 43H58Q55 47 47 47Q35 46 34 39ZM35 28Q37 18 47 18Q57 18 59 28Z" fill="url(#ieBlue)" stroke="#0b2c58" strokeWidth="1" fillRule="evenodd" />
    <path d="M83 16Q88 1 73 1Q46 3 22 26Q2 46 8 58Q14 66 36 57Q22 60 17 55Q14 46 32 28Q56 6 74 4Q84 4 80 16Z" fill="#f0ad22" stroke="#d08d16" strokeWidth="0.8" />
  </svg>
);

const MediaPlayer = () => (
  <svg width="78" height="54" viewBox="0 0 78 54" aria-hidden="true">
    <path d="M50 48L76 42L64 53Z" fill="#8aa4c0" opacity="0.6" />
    <path d="M50 2L68 4V46L58 50H50Z" fill="#9ed0ea" stroke="#4b9cc4" />
    <path d="M46 1L63 3V48L56 51H46Z" fill="#8cc8e6" stroke="#4b9cc4" />
    <path d="M1 2H57V53L1 46Z" fill="#a8d9ee" stroke="#4b9cc4" strokeWidth="1.4" />
    <path d="M7 2V46" stroke="#7fbddb" />
    <ellipse cx="29" cy="26" rx="23" ry="19.5" fill="#f2742a" stroke="#d6e6ee" strokeWidth="1.6" />
    <path d="M19 14L44 26L19 38Z" fill="#fff" />
  </svg>
);

const Keyboard = () => (
  <svg width="44" height="28" viewBox="0 0 44 28" aria-hidden="true">
    <path d="M8 11Q12 3 20 6T34 7L39 1" fill="none" stroke="#666d75" strokeWidth="2" />
    <rect x="1" y="11" width="42" height="15" fill="#b9b9b9" stroke="#777" strokeWidth="1.5" />
    <path d="M5 16H40M5 20H40" stroke="#fff" strokeWidth="2.6" strokeDasharray="4 2" />
    <path d="M12 24H32" stroke="#fff" strokeWidth="2" />
  </svg>
);

const RestoreSmall = () => (
  <svg width="16" height="30" viewBox="0 0 16 30" aria-hidden="true">
    <path d="M5 5V2H15V7H11M1 5H11V10H1Z" fill="none" stroke="#fff" strokeWidth="2" />
    <path d="M3 24H13L8 29Z" fill="#fff" />
  </svg>
);

const NetworkTray = () => (
  <svg width="44" height="34" viewBox="0 0 44 34" aria-hidden="true">
    <rect x="9" y="6" width="33" height="21" fill="#69788a" stroke="#fff" strokeWidth="3" />
    <path d="M16 32H36M26 27V32" stroke="#fff" strokeWidth="4" />
    <rect x="2" y="3" width="10" height="11" fill="#dfe4e8" stroke="#47525e" strokeWidth="1.5" />
    <path d="M4 1V4M10 1V4M7 14V33" stroke="#fff" strokeWidth="2.5" />
  </svg>
);

const Speaker = () => (
  <svg width="42" height="34" viewBox="0 0 42 34" aria-hidden="true">
    <path d="M1 10H8V24H1Z" fill="#fff" stroke="#4b5560" strokeWidth="1.2" />
    <path d="M9 10L20 1V33L9 24Z" fill="#fff" stroke="#4b5560" strokeWidth="1.2" />
    <path d="M25 12Q29 17 25 22M30 9Q36 17 30 25M35 6Q43 17 35 28" fill="none" stroke="#dfe5ea" strokeWidth="2" />
  </svg>
);

/* ---------- data ---------- */

type Row = { label: string; icon: React.ReactNode; level: number; selected?: boolean };

const tree: Row[][] = [
  [
    { label: "下载", icon: <Downloads />, level: 2 },
    { label: "桌面", icon: <DesktopIcon />, level: 2 },
    { label: "最近访问的位置", icon: <Recent />, level: 2 },
  ],
  [
    { label: "库", icon: <Library />, level: 1 },
    { label: "视频", icon: <Video />, level: 2 },
    { label: "图片", icon: <Picture />, level: 2 },
    { label: "文档", icon: <Documents />, level: 2 },
    { label: "音乐", icon: <Music />, level: 2 },
  ],
  [{ label: "计算机", icon: <Computer />, level: 1 }],
  [
    { label: "网络", icon: <Globe />, level: 1 },
    { label: "SHANE", icon: <Computer />, level: 2, selected: true },
    { label: "WIN-IJ3R1VACVPP", icon: <Computer />, level: 2 },
  ],
];

const commands = ["网络和共享中心", "添加打印机", "添加无线设备"];

export default function App() {
  return (
    <Desktop>
      <GlobalStyle />
      <SharedDefs />
      <ExplorerWindow>
        <BackgroundTab />
        <Chrome>
          <WindowButtons>
            <WindowButton aria-label="最小化"><MinimizeGlyph /></WindowButton>
            <WindowButton aria-label="向下还原"><RestoreGlyph /></WindowButton>
            <WindowButton aria-label="关闭"><CrossGlyph /></WindowButton>
          </WindowButtons>
          <NavRow>
            <BackForward />
            <DropButton $narrow aria-label="最近浏览的页面"><HistoryArrow /></DropButton>
            <AddressBar>
              <Crumb>
                <Globe width={46} />
                <Triangle dir="right" w={11} h={16} fill="#000" />
                网络
                <Triangle dir="right" w={11} h={16} fill="#000" />
              </Crumb>
              <AddressSpacer />
              <DropButton aria-label="以前的位置"><Triangle dir="down" w={20} h={9} fill="#0a0a60" /></DropButton>
              <StopButton aria-label="停止"><StopGlyph /></StopButton>
            </AddressBar>
            <SearchBox>
              <SearchInput type="text" aria-label="搜索" placeholder="搜索 网络" />
              <Magnifier />
            </SearchBox>
          </NavRow>
        </Chrome>
        <Toolbar>
          <Commands>
            <ToolButton>
              组织
              <Triangle dir="down" w={14} h={7} fill="#1f3557" />
            </ToolButton>
            {commands.map((c) => (
              <ToolButton key={c}>{c}</ToolButton>
            ))}
          </Commands>
          <Tools>
            <ToolButton aria-label="视图"><ViewGlyph /></ToolButton>
            <ToolButton aria-label="更多选项" $gap={25}><Triangle dir="down" w={14} h={7} fill="#1f3557" /></ToolButton>
            <ToolButton aria-label="预览窗格" $gap={55}><PreviewGlyph /></ToolButton>
            <ToolButton aria-label="帮助" $gap={51}><HelpGlyph w={43} h={33} fill="url(#helpFill)" ring="#7d8794" /></ToolButton>
          </Tools>
        </Toolbar>
        <Body>
          <Sidebar>
            {tree.map((group, i) => (
              <TreeGroup key={i}>
                {group.map((row) => (
                  <TreeRow key={row.label} $level={row.level} $selected={row.selected}>
                    <TreeIcon>{row.icon}</TreeIcon>
                    <TreeLink href="#">{row.label}</TreeLink>
                  </TreeRow>
                ))}
              </TreeGroup>
            ))}
          </Sidebar>
          <ScrollTrack>
            <ScrollButton aria-label="向上滚动"><Triangle dir="up" w={20} h={9} fill="#4a4a4a" /></ScrollButton>
            <ScrollThumb />
            <ScrollButton aria-label="向下滚动"><Triangle dir="down" w={20} h={9} fill="#4a4a4a" /></ScrollButton>
          </ScrollTrack>
          <Content>
            <GroupHeader>
              <Collapse />
              <GroupTitle>计算机 (2)</GroupTitle>
              <GroupRule />
            </GroupHeader>
            <Items>WIN-IJ3R1VACVPP</Items>
          </Content>
        </Body>
        <Details>
          <DetailsPicture><BigComputer /></DetailsPicture>
          <DetailsName>SHANE</DetailsName>
          <DetailColumns>
            <Props $keyWidth={80}>
              <Key>类别:</Key>
              <Value>计算机</Value>
              <Key>工作组:</Key>
              <Value>WORKGROUP</Value>
            </Props>
            <Props $keyWidth={259}>
              <Key>网络位置:</Key>
              <Value>网络</Value>
            </Props>
          </DetailColumns>
        </Details>
      </ExplorerWindow>

      <Taskbar>
        <TaskButton $width={142} aria-label="开始"><StartOrb /></TaskButton>
        <TaskButton $width={146} aria-label="Internet Explorer"><InternetExplorer /></TaskButton>
        <TaskButton $width={133} $open aria-label="资源管理器"><Library width={84} height={62} /></TaskButton>
        <TaskButton $width={140} aria-label="Media Player"><MediaPlayer /></TaskButton>
        <TaskSpacer />
        <Tray>
          <Language $lift={4}>CH</Language>
          <TrayItem $left={15} $lift={6} aria-label="键盘"><Keyboard /></TrayItem>
          <TrayItem $left={10} $lift={8} aria-label="输入法帮助"><HelpGlyph w={40} h={31} fill="url(#trayHelp)" ring="#5c6570" /></TrayItem>
          <TrayItem $left={15} $lift={8} aria-label="还原语言栏"><RestoreSmall /></TrayItem>
          <TrayItem $left={34} aria-label="显示隐藏的图标"><Triangle dir="up" w={22} h={10} fill="#f2f5f7" /></TrayItem>
          <TrayItem $left={42} aria-label="网络状态"><NetworkTray /></TrayItem>
          <TrayItem $left={18} aria-label="音量"><Speaker /></TrayItem>
          <Clock>
            15:20
            <br />
            2024/5/11
          </Clock>
          <ShowDesktop aria-label="显示桌面" />
        </Tray>
      </Taskbar>

      <Dialog role="dialog" aria-label="Windows 安全">
        <DialogTitleBar>
          <DialogTitle>Windows 安全</DialogTitle>
          <DialogClose aria-label="关闭"><CrossGlyph /></DialogClose>
        </DialogTitleBar>
        <DialogBody onSubmit={(e) => e.preventDefault()}>
          <DialogIntro>
            <DialogHeading>输入网络密码</DialogHeading>
            <p>输入您的密码来连接到: SHANE</p>
          </DialogIntro>
          <CredentialPanel>
            <PictureSlot><UserTile /></PictureSlot>
            <Fields>
              <FieldStack>
                <FieldWrap>
                  <TextField $active type="text" aria-label="用户名" placeholder="用户名" />
                  <Caret />
                </FieldWrap>
                <FieldWrap>
                  <TextField type="password" aria-label="密码" placeholder="密码" />
                </FieldWrap>
              </FieldStack>
              <DomainLine>域: WIN-IJ3R1VACVPP</DomainLine>
              <RememberLabel>
                <CheckBox type="checkbox" />
                记住我的凭据
              </RememberLabel>
            </Fields>
          </CredentialPanel>
          <ErrorLine>
            <ErrorIcon />
            <span>登录失败: 未知的用户名或错误密码。</span>
          </ErrorLine>
          <DialogFooter>
            <PushButton $primary type="submit">确定</PushButton>
            <PushButton type="button">取消</PushButton>
          </DialogFooter>
        </DialogBody>
      </Dialog>

      <Watermark>CSDN @不修边幅的shame</Watermark>
    </Desktop>
  );
}
